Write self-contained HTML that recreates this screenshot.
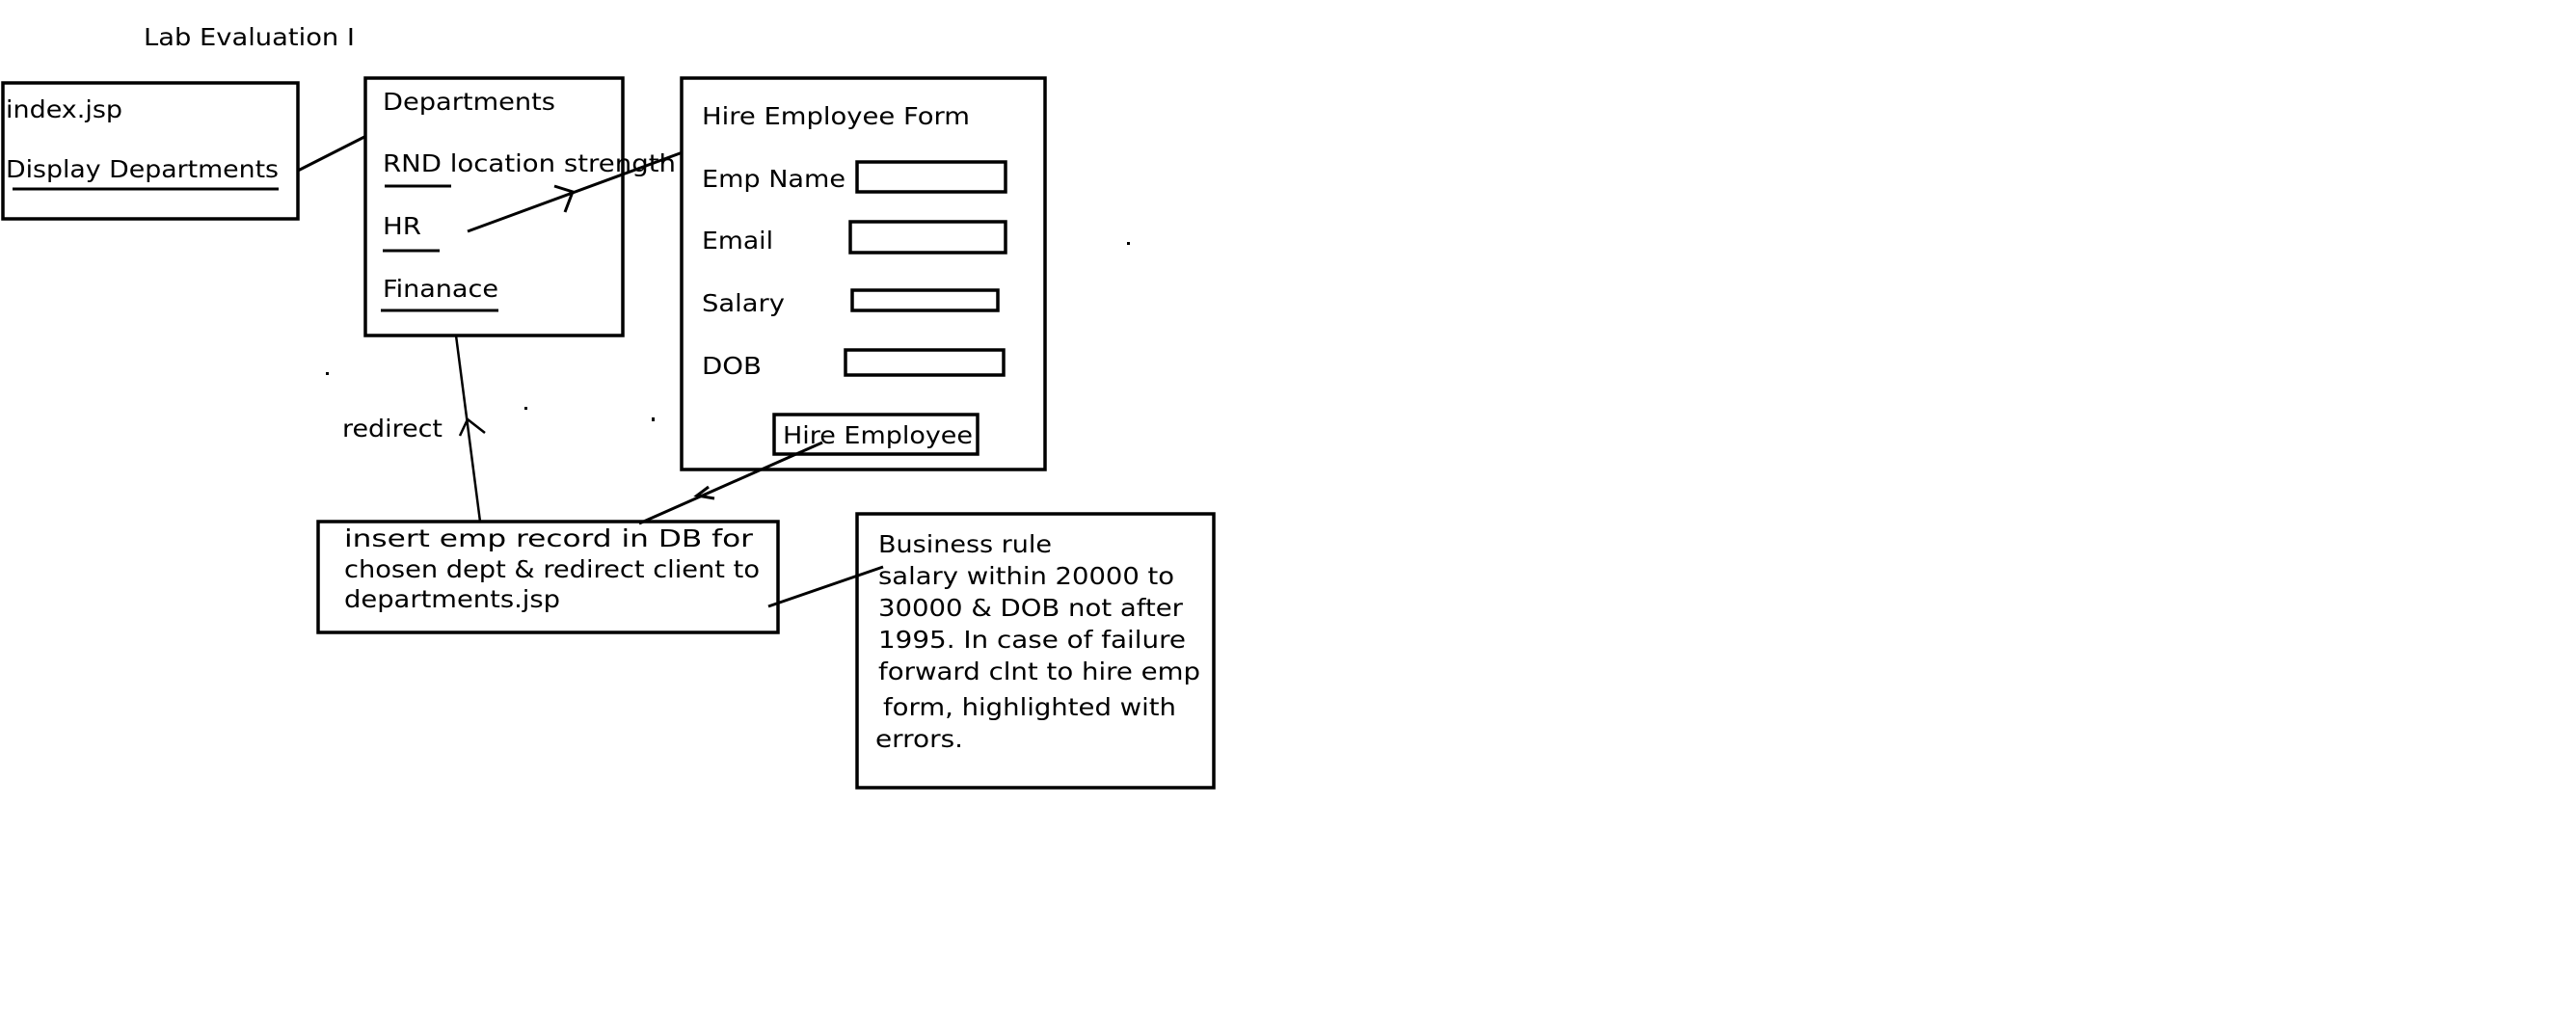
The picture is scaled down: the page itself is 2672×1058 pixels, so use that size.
<!DOCTYPE html>
<html><head><style>html,body{margin:0;padding:0;background:#fff;width:2672px;height:1058px;overflow:hidden}</style></head>
<body>
<svg width="2672" height="1058" xmlns="http://www.w3.org/2000/svg" font-family="'DejaVu Sans','Liberation Sans',sans-serif" font-size="25" fill="#000">
<g fill="none" stroke="#000" stroke-width="3.5">
<rect x="3" y="86" width="306" height="141"/>
<rect x="379" y="81" width="267" height="267"/>
<rect x="707" y="81" width="377" height="406"/>
<rect x="889" y="168" width="154" height="31"/>
<rect x="882" y="230" width="161" height="32"/>
<rect x="884" y="301" width="151" height="21"/>
<rect x="877" y="363" width="164" height="26"/>
<rect x="803" y="430" width="211" height="41"/>
<rect x="330" y="541" width="477" height="115"/>
<rect x="889" y="533" width="370" height="284"/>
</g>
<g stroke="#000" stroke-width="3">
<line x1="13" y1="196" x2="289" y2="196"/>
<line x1="399" y1="193" x2="468" y2="193"/>
<line x1="397" y1="260" x2="456" y2="260"/>
<line x1="395" y1="322" x2="517" y2="322"/>
<line x1="309" y1="177" x2="378" y2="142"/>
<line x1="485" y1="240" x2="708" y2="158"/>
<polyline fill="none" points="575,193 594,199 586,220"/>
<line x1="853" y1="459" x2="663" y2="543"/>
<polyline fill="none" points="735,505 723,514 741,517"/>
<line x1="473" y1="348" x2="498" y2="541" stroke-width="2.5"/>
<polyline fill="none" points="477,452 485,435 503,449" stroke-width="2.5"/>
<line x1="797" y1="629" x2="916" y2="588"/>
</g>
<g fill="#000">
<rect x="338" y="386" width="3" height="3"/><rect x="544" y="422" width="3" height="3"/>
<rect x="676" y="433" width="3" height="4"/><rect x="1169" y="251" width="3" height="3"/>
</g>
<text x="149" y="47" textLength="219" lengthAdjust="spacingAndGlyphs">Lab Evaluation I</text>
<text x="6" y="122" textLength="121" lengthAdjust="spacingAndGlyphs">index.jsp</text>
<text x="6" y="184" textLength="283" lengthAdjust="spacingAndGlyphs">Display Departments</text>
<text x="397" y="114" textLength="179" lengthAdjust="spacingAndGlyphs">Departments</text>
<text x="397" y="178" textLength="304" lengthAdjust="spacingAndGlyphs">RND location strength</text>
<text x="397" y="243" textLength="40" lengthAdjust="spacingAndGlyphs">HR</text>
<text x="397" y="308" textLength="120" lengthAdjust="spacingAndGlyphs">Finanace</text>
<text x="728" y="129" textLength="278" lengthAdjust="spacingAndGlyphs">Hire Employee Form</text>
<text x="728" y="194" textLength="149" lengthAdjust="spacingAndGlyphs">Emp Name</text>
<text x="728" y="258" textLength="74" lengthAdjust="spacingAndGlyphs">Email</text>
<text x="728" y="323" textLength="86" lengthAdjust="spacingAndGlyphs">Salary</text>
<text x="728" y="388" textLength="62" lengthAdjust="spacingAndGlyphs">DOB</text>
<text x="812" y="460" textLength="197" lengthAdjust="spacingAndGlyphs">Hire Employee</text>
<text x="355" y="453" textLength="104" lengthAdjust="spacingAndGlyphs">redirect</text>
<text x="357" y="567" textLength="424" lengthAdjust="spacingAndGlyphs">insert emp record in DB for</text>
<text x="357" y="599" textLength="431" lengthAdjust="spacingAndGlyphs">chosen dept &amp; redirect client to</text>
<text x="357" y="630" textLength="224" lengthAdjust="spacingAndGlyphs">departments.jsp</text>
<text x="911" y="573" textLength="180" lengthAdjust="spacingAndGlyphs">Business rule</text>
<text x="911" y="606" textLength="307" lengthAdjust="spacingAndGlyphs">salary within 20000 to</text>
<text x="911" y="639" textLength="316" lengthAdjust="spacingAndGlyphs">30000 &amp; DOB not after</text>
<text x="911" y="672" textLength="319" lengthAdjust="spacingAndGlyphs">1995. In case of failure</text>
<text x="911" y="705" textLength="334" lengthAdjust="spacingAndGlyphs">forward clnt to hire emp</text>
<text x="916" y="742" textLength="304" lengthAdjust="spacingAndGlyphs">form, highlighted with</text>
<text x="908" y="775" textLength="91" lengthAdjust="spacingAndGlyphs">errors.</text>
</svg>
</body></html>
